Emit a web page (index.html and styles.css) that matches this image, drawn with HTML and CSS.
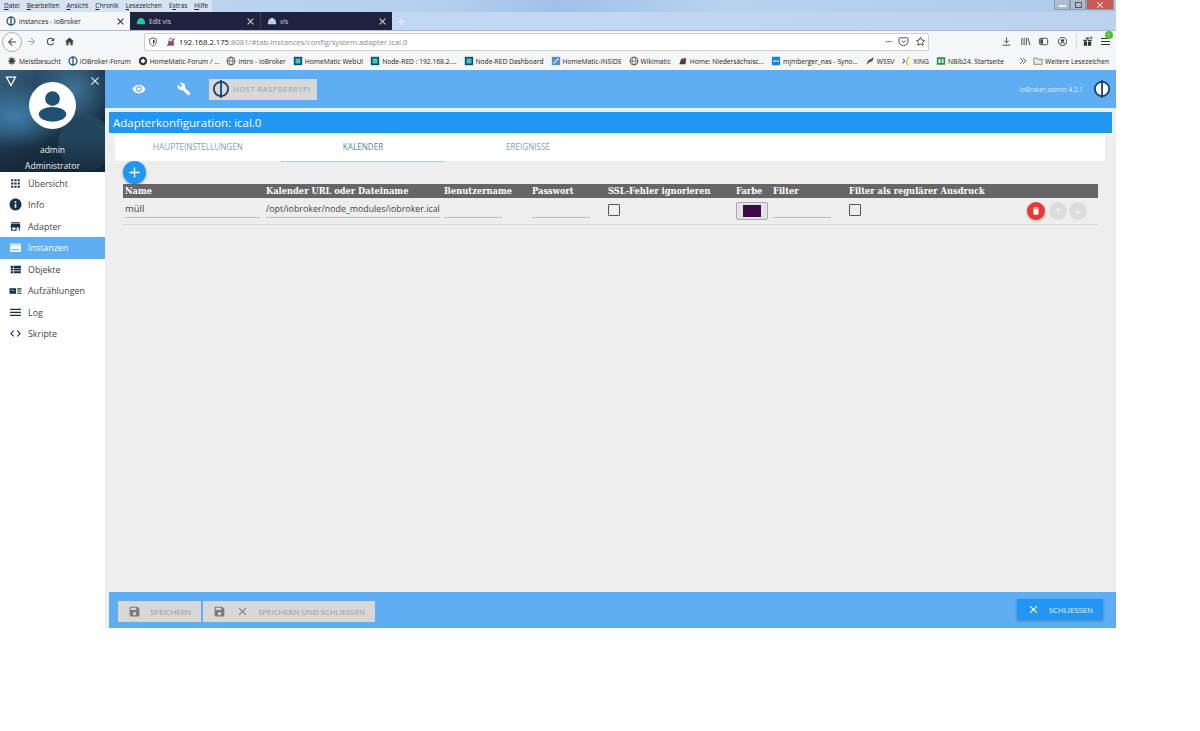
FILE: index.html
```html
<!DOCTYPE html>
<html lang="de">
<head>
    <meta charset="UTF-8">
    <meta name="viewport" content="width=device-width, initial-scale=1.0">
    <title>instances - ioBroker</title>
    <link rel="stylesheet" href="styles.css">
</head>
<body>

<div class="window">

    <div class="titlebar">
        <div class="menu">
            <span><u>D</u>atei</span>
            <span><u>B</u>earbeiten</span>
            <span><u>A</u>nsicht</span>
            <span><u>C</u>hronik</span>
            <span><u>L</u>esezeichen</span>
            <span>E<u>x</u>tras</span>
            <span><u>H</u>ilfe</span>
        </div>
        <div class="win-controls">
            <span class="win-btn"><i class="win-min"></i></span>
            <span class="win-btn"><i class="win-max"></i></span>
            <span class="win-btn win-close">
                <svg viewBox="0 0 24 24"><path d="M19 6.41L17.59 5 12 10.59 6.41 5 5 6.41 10.59 12 5 17.59 6.41 19 12 13.41 17.59 19 19 17.59 13.41 12z"/></svg>
            </span>
        </div>
    </div>

    <div class="tabstrip">
        <div class="tab tab-active">
            <svg class="tab-icon" viewBox="0 0 24 24"><circle cx="12" cy="12" r="9.5" fill="none" stroke="#1d4f7c" stroke-width="3"/><rect x="10.5" y="1" width="3" height="22" fill="#1d4f7c"/></svg>
            <span class="tab-title">instances - ioBroker</span>
            <svg class="tab-close" viewBox="0 0 24 24"><path d="M19 6.41L17.59 5 12 10.59 6.41 5 5 6.41 10.59 12 5 17.59 6.41 19 12 13.41 17.59 19 19 17.59 13.41 12z"/></svg>
        </div>
        <div class="tab tab-dark">
            <svg class="tab-icon" viewBox="0 0 24 24"><path d="M2 20c0-9 4-15 10-15s10 6 10 15z" fill="#22c99a"/></svg>
            <span class="tab-title">Edit vis</span>
            <svg class="tab-close" viewBox="0 0 24 24"><path d="M19 6.41L17.59 5 12 10.59 6.41 5 5 6.41 10.59 12 5 17.59 6.41 19 12 13.41 17.59 19 19 17.59 13.41 12z"/></svg>
        </div>
        <div class="tab tab-dark tab-last">
            <svg class="tab-icon" viewBox="0 0 24 24"><path d="M2 20c0-9 4-15 10-15s10 6 10 15z" fill="#b9d6e6"/></svg>
            <span class="tab-title">vis</span>
            <svg class="tab-close" viewBox="0 0 24 24"><path d="M19 6.41L17.59 5 12 10.59 6.41 5 5 6.41 10.59 12 5 17.59 6.41 19 12 13.41 17.59 19 19 17.59 13.41 12z"/></svg>
        </div>
        <span class="tab-new">+</span>
    </div>

    <div class="navbar">
        <span class="nav-back">
            <svg viewBox="0 0 24 24"><path d="M20 11H7.83l5.59-5.59L12 4l-8 8 8 8 1.41-1.41L7.83 13H20z"/></svg>
        </span>
        <svg class="nav-icon nav-off" viewBox="0 0 24 24"><path d="M4 11h12.17l-5.59-5.59L12 4l8 8-8 8-1.41-1.41L16.17 13H4z"/></svg>
        <svg class="nav-icon" viewBox="0 0 24 24"><path d="M17.65 6.35A7.96 7.96 0 0 0 12 4a8 8 0 1 0 7.73 10h-2.08A6 6 0 1 1 12 6c1.66 0 3.14.69 4.22 1.78L13 11h7V4z"/></svg>
        <svg class="nav-icon" viewBox="0 0 24 24"><path d="M10 20v-6h4v6h5v-8h3L12 3 2 12h3v8z"/></svg>
        <div class="urlbar">
            <svg class="url-shield" viewBox="0 0 24 24"><path d="M12 2l8 3v6c0 5-3.4 9.3-8 11-4.6-1.7-8-6-8-11V5z" fill="none" stroke="#444" stroke-width="2"/><path d="M12 6l4 1.5V11c0 3-1.6 5.4-4 6.7z" fill="#444"/></svg>
            <svg class="url-lock" viewBox="0 0 24 24"><rect x="5" y="10" width="14" height="11" rx="1" fill="#666"/><path d="M8 10V7a4 4 0 0 1 8 0v3" fill="none" stroke="#666" stroke-width="2"/><path d="M3 21L21 4" stroke="#d7264b" stroke-width="2.5"/></svg>
            <span class="url-text">192.168.2.175<em>:8081/#tab-instances/config/system.adapter.ical.0</em></span>
            <span class="url-dots">•••</span>
            <svg class="url-action" viewBox="0 0 24 24"><path d="M4 4h16a2 2 0 0 1 2 2v5a10 10 0 0 1-20 0V6a2 2 0 0 1 2-2z" fill="none" stroke="#444" stroke-width="2"/><path d="M7.5 10l4.5 4.5 4.500-4.5" fill="none" stroke="#444" stroke-width="2"/></svg>
            <svg class="url-action" viewBox="0 0 24 24"><path d="M12 3l2.8 5.8 6.2.9-4.5 4.4 1.1 6.300L12 17.4l-5.600 3 1.100-6.300L3 9.700l6.200-.9z" fill="none" stroke="#444" stroke-width="2"/></svg>
        </div>
        <div class="toolbar">
            <svg class="nav-icon" viewBox="0 0 24 24"><path d="M12 3v12M7 10l5 5 5-5M4 20h16" fill="none" stroke="#444" stroke-width="2"/></svg>
            <svg class="nav-icon" viewBox="0 0 24 24"><path d="M4 4v16M9 4v16M14 4v16M17 4l5 16" fill="none" stroke="#444" stroke-width="2"/></svg>
            <svg class="nav-icon" viewBox="0 0 24 24"><rect x="3" y="5" width="18" height="14" rx="3" fill="none" stroke="#444" stroke-width="2"/><rect x="5" y="7" width="6" height="10" fill="#444"/></svg>
            <svg class="nav-icon" viewBox="0 0 24 24"><circle cx="12" cy="12" r="9" fill="none" stroke="#444" stroke-width="2"/><circle cx="12" cy="10" r="3.5" fill="#444"/><path d="M6 17c2-3 10-3 12 0" fill="none" stroke="#444" stroke-width="2"/></svg>
            <span class="toolbar-sep"></span>
            <svg class="nav-icon" viewBox="0 0 24 24"><path d="M3 8h8v4H3zM13 8h8v4h-8zM4 13h7v8H4zM13 13h7v8h-7zM7 3l5 5 5-5z" fill="#333"/><circle cx="20" cy="4" r="3" fill="#2aa3df"/></svg>
            <span class="hamburger"><i></i><i></i><i></i><b>↑</b></span>
        </div>
    </div>

    <div class="bookmarks">
        <span class="bm"><svg viewBox="0 0 24 24"><path d="M12 8a4 4 0 1 0 0 8 4 4 0 0 0 0-8zm9 5v-2l-3-.5-1-2 2-2.5-1.5-1.5-2.5 2-2-1L12 2h-1l-.5 3-2 1-2.5-2L4.5 5.500l2 2.500-1 2L3 11v2l2.500.5 1 2-2 2.500L6 19.500l2.500-2 2 1 .5 3.500h1l.5-3.500 2-1 2.500 2 1.500-1.500-2-2.500 1-2z" fill="#444"/></svg>Meistbesucht</span>
        <span class="bm"><svg viewBox="0 0 24 24"><circle cx="12" cy="12" r="9.5" fill="none" stroke="#1d4f7c" stroke-width="3"/><rect x="10.5" y="1" width="3" height="22" fill="#1d4f7c"/></svg>IOBroker-Forum</span>
        <span class="bm"><svg viewBox="0 0 24 24"><circle cx="12" cy="12" r="10" fill="#333"/><path d="M12 6l6 6-6 6-6-6z" fill="#fff"/></svg>HomeMatic-Forum / ...</span>
        <span class="bm"><svg viewBox="0 0 24 24"><circle cx="12" cy="12" r="9.5" fill="none" stroke="#444" stroke-width="2"/><path d="M2 12h20M12 2c-6 6-6 14 0 20M12 2c6 6 6 14 0 20" fill="none" stroke="#444" stroke-width="1.5"/></svg>intro - ioBroker</span>
        <span class="bm"><svg viewBox="0 0 24 24"><rect x="2" y="2" width="20" height="20" fill="#0b4f66"/><rect x="6" y="6" width="12" height="12" fill="#49c2c9"/></svg>HomeMatic WebUI</span>
        <span class="bm"><svg viewBox="0 0 24 24"><rect x="2" y="2" width="20" height="20" fill="#0b4f66"/><rect x="6" y="6" width="12" height="12" fill="#49c2c9"/></svg>Node-RED : 192.168.2....</span>
        <span class="bm"><svg viewBox="0 0 24 24"><rect x="2" y="2" width="20" height="20" fill="#0b4f66"/><rect x="6" y="6" width="12" height="12" fill="#49c2c9"/></svg>Node-RED Dashboard</span>
        <span class="bm"><svg viewBox="0 0 24 24"><rect x="2" y="2" width="20" height="20" fill="#5b8fc0"/><path d="M6 18L18 6" stroke="#cfe2f3" stroke-width="3"/></svg>HomeMatic-INSIDE</span>
        <span class="bm"><svg viewBox="0 0 24 24"><circle cx="12" cy="12" r="9.5" fill="none" stroke="#444" stroke-width="2"/><path d="M2 12h20M12 2c-6 6-6 14 0 20M12 2c6 6 6 14 0 20" fill="none" stroke="#444" stroke-width="1.5"/></svg>Wikimatic</span>
        <span class="bm"><svg viewBox="0 0 24 24"><path d="M3 20l5-14 6 3 6-5-2 16z" fill="#444"/><circle cx="15" cy="8" r="3.5" fill="#c0272d"/></svg>Home: Niedersächsisc...</span>
        <span class="bm"><svg viewBox="0 0 24 24"><rect x="2" y="2" width="20" height="20" rx="2" fill="#1a86d0"/><path d="M5 12h14" stroke="#fff" stroke-width="3" stroke-dasharray="3 1"/></svg>mjmberger_nas - Syno...</span>
        <span class="bm"><svg viewBox="0 0 24 24"><path d="M3 21l5-11 6-3 7-4-3 9-7 3z" fill="#3d5a3a"/></svg>WSSV</span>
        <span class="bm"><svg viewBox="0 0 24 24"><path d="M4 7l3 5-4 6h3l4-6-3-5z" fill="#1a6f6f"/><path d="M18 2l-7 12 4 8h3l-4-8 7-12z" fill="#b0c417"/></svg>XING</span>
        <span class="bm"><svg viewBox="0 0 24 24"><rect x="2" y="3" width="20" height="18" fill="#2f8f4e"/><path d="M6 8h5v9H6zM14 8h4v9h-4z" fill="#fff"/></svg>NBib24. Startseite</span>
        <span class="bm-more">
            <svg viewBox="0 0 24 24"><path d="M5 5l7 7-7 7M12 5l7 7-7 7" fill="none" stroke="#444" stroke-width="2"/></svg>
            <span class="bm"><svg viewBox="0 0 24 24"><path d="M2 5h8l2 3h10v12H2z" fill="#e9e9e9" stroke="#555" stroke-width="1.5"/></svg>Weitere Lesezeichen</span>
        </span>
    </div>

    <div class="app">

        <aside class="sidebar">
            <div class="profile">
                <svg class="profile-toggle" viewBox="0 0 24 24"><path d="M3 4h18L12 21z" fill="none" stroke="#fff" stroke-width="2.5"/></svg>
                <svg class="profile-close" viewBox="0 0 24 24"><path d="M19 6.41L17.59 5 12 10.59 6.41 5 5 6.41 10.59 12 5 17.59 6.41 19 12 13.41 17.59 19 19 17.59 13.41 12z"/></svg>
                <div class="avatar">
                    <svg viewBox="0 0 48 48"><circle cx="24" cy="24" r="24" fill="#fff"/><circle cx="24" cy="17" r="7.5" fill="#1f4f73"/><ellipse cx="24" cy="33" rx="14" ry="7.5" fill="#1f4f73"/></svg>
                </div>
                <div class="profile-name">admin</div>
                <div class="profile-role">Administrator</div>
            </div>
            <ul class="side-menu">
                <li><svg viewBox="0 0 24 24"><path d="M4 8h4V4H4v4zm6 12h4v-4h-4v4zm-6 0h4v-4H4v4zm0-6h4v-4H4v4zm6 0h4v-4h-4v4zm6-10v4h4V4h-4zm-6 4h4V4h-4v4zm6 6h4v-4h-4v4zm0 6h4v-4h-4v4z"/></svg>Übersicht</li>
                <li><svg viewBox="0 0 24 24"><path d="M12 1C5.9 1 1 5.9 1 12s4.9 11 11 11 11-4.9 11-11S18.1 1 12 1zm1.5 17h-3v-7h3v7zm0-9h-3V6h3v3z"/></svg>Info</li>
                <li><svg viewBox="0 0 24 24"><path d="M20 4H4v2h16V4zm1 10v-2l-1-5H4l-1 5v2h1v6h10v-6h4v6h2v-6h1zm-9 4H6v-4h6v4z"/></svg>Adapter</li>
                <li class="active"><svg viewBox="0 0 24 24"><path d="M2 5h20v15H2z" fill="#fff"/><path d="M2 5h20v5H2z" fill="#cfe6fb"/><path d="M5 15h14v2H5z" fill="#5faef3"/></svg>Instanzen</li>
                <li><svg viewBox="0 0 24 24"><path d="M3 14h4.5v-4H3v4zm0 5h4.5v-4H3v4zM3 9h4.5V5H3v4zm5.5 5H22v-4H8.5v4zm0 5H22v-4H8.5v4zm0-14v4H22V5H8.5z"/></svg>Objekte</li>
                <li><svg viewBox="0 0 24 24"><path d="M1 8h12v10H1zM15 8h8v2h-8zM15 12h8v2h-8zM15 16h8v2h-8z"/><path d="M4 11h6v1H4z" fill="#fff"/></svg>Aufzählungen</li>
                <li><svg viewBox="0 0 24 24"><path d="M2 5h20v2.5H2zM2 10.5h20V13H2zM2 16h20v2.5H2z"/></svg>Log</li>
                <li><svg viewBox="0 0 24 24"><path d="M9.4 16.6L4.8 12l4.6-4.6L8 6l-6 6 6 6 1.4-1.4zm5.2 0l4.6-4.6-4.6-4.6L16 6l6 6-6 6-1.4-1.4z"/></svg>Skripte</li>
            </ul>
        </aside>

        <main class="content">
            <header class="appbar">
                <svg class="appbar-icon" viewBox="0 0 24 24"><path d="M12 4.5C7 4.5 2.73 7.61 1 12c1.73 4.39 6 7.5 11 7.5s9.27-3.11 11-7.5c-1.73-4.39-6-7.5-11-7.5zM12 17c-2.76 0-5-2.24-5-5s2.24-5 5-5 5 2.24 5 5-2.24 5-5 5zm0-8c-1.66 0-3 1.34-3 3s1.34 3 3 3 3-1.34 3-3-1.34-3-3-3z"/></svg>
                <svg class="appbar-icon" viewBox="0 0 24 24"><path d="M22.7 19l-9.1-9.1c.9-2.3.4-5-1.5-6.9-2-2-5-2.4-7.4-1.3L9 6 6 9 1.6 4.7C.4 7.1.9 10.1 2.9 12.1c1.9 1.9 4.6 2.4 6.9 1.5l9.1 9.1c.4.4 1 .4 1.4 0l2.3-2.3c.5-.4.5-1.1.1-1.4z"/></svg>
                <div class="host-btn">
                    <svg viewBox="0 0 24 24"><circle cx="12" cy="12" r="9.5" fill="none" stroke="#1c4468" stroke-width="2.5"/><rect x="10.8" y="0" width="2.4" height="24" fill="#1c4468"/></svg>
                    <span>HOST RASPBERRYPI</span>
                </div>
                <span class="version">ioBroker.admin 4.2.1</span>
                <svg class="appbar-logo" viewBox="0 0 24 24"><circle cx="12" cy="12" r="9.5" fill="#fff" stroke="#1c4468" stroke-width="2.5"/><rect x="10.8" y="0" width="2.4" height="24" fill="#1c4468"/></svg>
            </header>

            <section class="dialog">
                <h1 class="dialog-title">Adapterkonfiguration: ical.0</h1>
                <nav class="tabs">
                    <a class="tabs-item">HAUPTEINSTELLUNGEN</a>
                    <a class="tabs-item tabs-current">KALENDER</a>
                    <a class="tabs-item">EREIGNISSE</a>
                </nav>
                <div class="dialog-body">
                    <button class="add-btn"><svg viewBox="0 0 24 24"><path d="M19 13h-6v6h-2v-6H5v-2h6V5h2v6h6v2z"/></svg></button>
                    <table class="cal-table">
                        <thead>
                            <tr>
                                <th class="col-name">Name</th>
                                <th class="col-url">Kalender URL oder Dateiname</th>
                                <th class="col-user">Benutzername</th>
                                <th class="col-pass">Passwort</th>
                                <th class="col-ssl">SSL-Fehler ignorieren</th>
                                <th class="col-color">Farbe</th>
                                <th class="col-filter">Filter</th>
                                <th class="col-regex">Filter als regulärer Ausdruck</th>
                                <th class="col-btns"></th>
                            </tr>
                        </thead>
                        <tbody>
                            <tr>
                                <td><div class="field">müll</div></td>
                                <td><div class="field field-url">/opt/iobroker/node_modules/iobroker.ical</div></td>
                                <td><div class="field field-short"></div></td>
                                <td><div class="field field-short"></div></td>
                                <td><span class="checkbox"></span></td>
                                <td><span class="color-btn"><i></i></span></td>
                                <td><div class="field field-short"></div></td>
                                <td><span class="checkbox"></span></td>
                                <td>
                                    <div class="row-btns">
                                        <span class="round-btn round-del"><svg viewBox="0 0 24 24"><path d="M6 19c0 1.1.9 2 2 2h8c1.1 0 2-.9 2-2V7H6v12zM19 4h-3.5l-1-1h-5l-1 1H5v2h14V4z"/></svg></span>
                                        <span class="round-btn"><svg viewBox="0 0 24 24"><path d="M4 12l1.41 1.41L11 7.83V20h2V7.83l5.58 5.59L20 12l-8-8-8 8z"/></svg></span>
                                        <span class="round-btn"><svg viewBox="0 0 24 24"><path d="M20 12l-1.41-1.41L13 16.17V4h-2v12.17l-5.58-5.59L4 12l8 8 8-8z"/></svg></span>
                                    </div>
                                </td>
                            </tr>
                        </tbody>
                    </table>
                </div>
                <footer class="dialog-footer">
                    <span class="foot-btn">
                        <svg viewBox="0 0 24 24"><path d="M17 3H5c-1.11 0-2 .9-2 2v14c0 1.1.89 2 2 2h14c1.1 0 2-.9 2-2V7l-4-4zm-5 16c-1.66 0-3-1.34-3-3s1.34-3 3-3 3 1.34 3 3-1.34 3-3 3zm3-10H5V5h10v4z"/></svg>
                        <span>SPEICHERN</span>
                    </span>
                    <span class="foot-btn">
                        <svg viewBox="0 0 24 24"><path d="M17 3H5c-1.11 0-2 .9-2 2v14c0 1.1.89 2 2 2h14c1.1 0 2-.9 2-2V7l-4-4zm-5 16c-1.66 0-3-1.34-3-3s1.34-3 3-3 3 1.34 3 3-1.34 3-3 3zm3-10H5V5h10v4z"/></svg>
                        <svg viewBox="0 0 24 24"><path d="M19 6.41L17.59 5 12 10.59 6.41 5 5 6.41 10.59 12 5 17.59 6.41 19 12 13.41 17.59 19 19 17.59 13.41 12z"/></svg>
                        <span>SPEICHERN UND SCHLIESSEN</span>
                    </span>
                    <span class="foot-btn foot-close">
                        <svg viewBox="0 0 24 24"><path d="M19 6.41L17.59 5 12 10.59 6.41 5 5 6.41 10.59 12 5 17.59 6.41 19 12 13.41 17.59 19 19 17.59 13.41 12z"/></svg>
                        <span>SCHLIESSEN</span>
                    </span>
                </footer>
            </section>
        </main>
    </div>
</div>

</body>
</html>
```

FILE: styles.css
```css
* {
    box-sizing: border-box;
}
html, body {
    margin: 0;
    background: #fff;
}
body {
    height: 731px;
    overflow: hidden;
    font-family: "Open Sans", "Liberation Sans", sans-serif;
    color: #333;
}
svg {
    display: block;
    flex: none;
    fill: currentColor;
}
.window {
    width: 1116px;
    height: 628px;
    display: flex;
    flex-direction: column;
}

/* browser chrome */
.titlebar {
    height: 12px;
    display: flex;
    justify-content: space-between;
    background: linear-gradient(90deg, #c3d8ef 0%, #b4cfec 40%, #9fc1e8 50%, #b9d3ef 65%, #aecbeb 100%);
}
.menu {
    width: 212px;
    padding-left: 4px;
    display: flex;
    gap: 7px;
    font-size: 6.4px;
    line-height: 11px;
    background: #d6e3f1;
    color: #222;
}
.win-controls {
    width: 60px;
    height: 10px;
    margin-right: 2px;
    display: flex;
}
.win-btn {
    flex: 1;
    display: flex;
    align-items: center;
    justify-content: center;
    background: #aebccc;
    border: 1px solid #8d9bad;
    border-top: none;
}
.win-min {
    width: 7px;
    height: 2px;
    margin-top: 3px;
    background: #eef;
}
.win-max {
    width: 7px;
    height: 6px;
    border: 1px solid #556;
}
.win-close {
    flex: 1.8;
    background: #c75a52;
    color: #fff;
}
.win-close svg {
    width: 10px;
    height: 10px;
}
.tabstrip {
    height: 18px;
    display: flex;
    align-items: stretch;
    background: linear-gradient(90deg, #bcd6f2, #c1d8f1 50%, #bbd3ee);
}
.tab {
    width: 131px;
    padding: 0 4px 0 6px;
    display: flex;
    align-items: center;
    gap: 3px;
    font-size: 6.7px;
}
.tab-active {
    width: 130px;
    background: #f5f6f7;
    color: #222;
}
.tab-dark {
    background: #20233f;
    color: #d7d8e0;
    border-right: 1px solid #3a3d58;
}
.tab-last {
    border-right: none;
}
.tab-icon {
    width: 10px;
    height: 10px;
}
.tab-title {
    flex: 1;
}
.tab-close {
    width: 11px;
    height: 11px;
}
.tab-new {
    margin-left: 5px;
    color: #e8f0fa;
    font-size: 15px;
    line-height: 18px;
}
.navbar {
    height: 22px;
    padding-left: 2px;
    display: flex;
    align-items: center;
    background: #f5f6f7;
    border-top: 1px solid #a9bcd2;
}
.nav-back {
    width: 20px;
    height: 20px;
    margin-right: 4px;
    padding: 3px;
    border: 1px solid #b0b0b0;
    border-radius: 50%;
    background: #fbfbfb;
    color: #444;
}
.nav-icon {
    width: 11px;
    height: 11px;
    margin-right: 8px;
    color: #444;
}
.nav-off {
    color: #aaa;
}
.urlbar {
    width: 785px;
    height: 18px;
    margin-left: 61px;
    padding: 0 2px 0 3px;
    display: flex;
    align-items: center;
    background: #fff;
    border: 1px solid #cfcfcf;
    border-radius: 2px;
}
.url-shield {
    width: 10px;
    height: 10px;
    margin-right: 8px;
}
.url-lock {
    width: 10px;
    height: 10px;
    margin-right: 3px;
}
.url-text {
    flex: 1;
    font-size: 7.7px;
    color: #222;
}
.url-text em {
    font-style: normal;
    color: #8a8a8a;
}
.url-dots {
    margin-right: 6px;
    font-size: 6px;
    color: #444;
}
.url-action {
    width: 11px;
    height: 11px;
    margin-left: 6px;
}
.url-dots + .url-action {
    margin-left: 0;
}
.toolbar {
    margin-left: 72px;
    display: flex;
    align-items: center;
}
.toolbar .nav-icon {
    margin-right: 7.5px;
}
.toolbar-sep {
    width: 1px;
    height: 16px;
    margin: 0 5px 0 1px;
    background: #ddd;
}
.hamburger {
    position: relative;
    width: 9px;
    display: flex;
    flex-direction: column;
    gap: 2px;
}
.hamburger i {
    height: 1px;
    background: #333;
}
.hamburger b {
    position: absolute;
    top: -7px;
    left: 4px;
    width: 8px;
    height: 8px;
    border-radius: 50%;
    background: #57bd35;
    color: #fff;
    font-size: 6px;
    line-height: 8px;
    text-align: center;
}
.bookmarks {
    height: 18px;
    padding-left: 7px;
    display: flex;
    align-items: center;
    gap: 7px;
    background: #f5f6f7;
    font-size: 6.7px;
    white-space: nowrap;
    color: #222;
}
.bm {
    display: flex;
    align-items: center;
    gap: 2px;
}
.bm svg {
    width: 10px;
    height: 10px;
}
.bm-more {
    margin-left: auto;
    margin-right: 7px;
    display: flex;
    align-items: center;
    gap: 5px;
}
.bm-more > svg {
    width: 10px;
    height: 10px;
}

/* ioBroker app */
.app {
    flex: 1;
    display: flex;
    min-height: 0;
}
.sidebar {
    width: 105px;
    flex: none;
    background: #fff;
}
.profile {
    position: relative;
    height: 102px;
    padding-top: 12px;
    display: flex;
    flex-direction: column;
    align-items: center;
    color: #eaf0f4;
    font-size: 8.5px;
    background:
        linear-gradient(180deg, transparent 62%, rgba(20, 38, 52, .75) 100%),
        radial-gradient(circle at 82% 72%, #23465f 0 24%, transparent 25%),
        radial-gradient(ellipse at 15% 45%, #3f7ea8 0, transparent 42%),
        radial-gradient(ellipse at 70% 20%, #3e7396 0, transparent 38%),
        linear-gradient(135deg, #345f7c 0%, #1b3549 50%, #10202e 100%);
}
.profile-toggle {
    position: absolute;
    top: 5px;
    left: 5px;
    width: 12px;
    height: 12px;
}
.profile-close {
    position: absolute;
    top: 4px;
    right: 3px;
    width: 14px;
    height: 14px;
    color: #dfe8ee;
}
.avatar svg {
    width: 47px;
    height: 47px;
}
.profile-name {
    margin-top: 14px;
    line-height: 14px;
}
.profile-role {
    margin-top: 2px;
    line-height: 14px;
}
.side-menu {
    margin: 0;
    padding: .5px 0 0;
    list-style: none;
}
.side-menu li {
    height: 21.5px;
    padding-left: 9px;
    display: flex;
    align-items: center;
    gap: 6px;
    font-size: 8.9px;
    color: #444;
}
.side-menu li svg {
    width: 13px;
    height: 13px;
    color: #16324b;
}
.side-menu li.active {
    background: #5faef3;
    color: #fff;
}
.content {
    flex: 1;
    min-width: 0;
    display: flex;
    flex-direction: column;
    background: #eee;
}
.appbar {
    height: 38px;
    padding: 0 5px 0 27px;
    display: flex;
    align-items: center;
    background: #5faef3;
    color: #fff;
}
.appbar-icon {
    width: 14px;
    height: 14px;
    margin-right: 31px;
}
.host-btn {
    width: 108px;
    height: 21px;
    margin-left: -13px;
    padding-left: 3px;
    display: flex;
    align-items: center;
    gap: 3px;
    background: #d8d8d8;
    color: #a3a3a3;
    font-size: 7.8px;
    letter-spacing: .4px;
}
.host-btn svg {
    width: 18px;
    height: 18px;
}
.version {
    margin-left: auto;
    margin-right: 10px;
    font-size: 6.5px;
    color: #d9ecfb;
}
.appbar-logo {
    width: 18px;
    height: 18px;
}
.dialog {
    flex: 1;
    min-height: 0;
    margin-left: 4px;
    padding-top: 4px;
    display: flex;
    flex-direction: column;
}
.dialog-title {
    width: 1003px;
    height: 21px;
    margin: 0;
    padding-left: 4px;
    background: #2196f3;
    color: #fff;
    font-size: 11.5px;
    font-weight: 400;
    line-height: 21px;
}
.tabs {
    width: 990px;
    height: 28px;
    margin-left: 6px;
    display: grid;
    grid-template-columns: 166px 164px 166px;
    background: #fff;
}
.tabs-item {
    text-align: center;
    font-size: 8.15px;
    line-height: 28px;
    color: #7b9fb9;
}
.tabs-current {
    color: #5b84a3;
    border-bottom: 1px solid #a9cbe4;
}
.dialog-body {
    flex: 1;
    min-height: 0;
    padding-left: 14px;
}
.add-btn {
    width: 23px;
    height: 23px;
    padding: 3px;
    display: block;
    border: none;
    border-radius: 50%;
    background: #2196f3;
    color: #fff;
    box-shadow: 0 1px 3px rgba(0, 0, 0, .3);
}
.cal-table {
    width: 975px;
    table-layout: fixed;
    border-collapse: collapse;
}
.cal-table th {
    height: 14px;
    padding: 0 2px;
    background: #666;
    color: #fff;
    font-family: "DejaVu Serif", serif;
    font-size: 8.3px;
    font-weight: 700;
    line-height: 14px;
    text-align: left;
    white-space: nowrap;
}
.col-name { width: 141px; }
.col-url { width: 178px; }
.col-user { width: 88px; }
.col-pass { width: 76px; }
.col-ssl { width: 128px; }
.col-color { width: 37px; }
.col-filter { width: 76px; }
.col-regex { width: 172px; }
.cal-table td {
    height: 26px;
    padding: 0 2px;
    vertical-align: top;
    border-bottom: 1px solid #d8d8d8;
}
.field {
    width: calc(100% - 2px);
    height: 20px;
    border-bottom: 1px solid #bdbdbd;
    font-size: 9.5px;
    line-height: 22px;
    color: #444;
    white-space: nowrap;
}
.field-short {
    width: 58px;
}
.field-url {
    width: 174px;
    font-size: 8.85px;
}
.checkbox {
    display: block;
    width: 12px;
    height: 12px;
    margin-top: 6px;
    border: 1px solid #555;
    border-radius: 1px;
}
.color-btn {
    display: block;
    width: 32px;
    height: 18px;
    margin-top: 4px;
    padding: 2px 6px;
    border: 1px solid #aaa;
    border-radius: 2px;
    background: #e4e4e8;
}
.color-btn i {
    display: block;
    height: 100%;
    background: #3c0a46;
}
.row-btns {
    padding: 4px 0 0 6px;
    display: flex;
    gap: 2px;
}
.round-btn {
    width: 18px;
    height: 18px;
    padding: 4px;
    border-radius: 50%;
    background: #dcdcdc;
    color: #f5f5f5;
}
.round-del {
    margin-right: 2px;
    background: #e53935;
    color: #fff;
    box-shadow: 0 1px 3px rgba(0, 0, 0, .3);
}
.dialog-footer {
    height: 36px;
    padding: 9px 13px 0 9px;
    display: flex;
    gap: 2px;
    background: #5faef3;
}
.foot-btn {
    height: 21px;
    padding: 0 10px;
    display: flex;
    align-items: center;
    gap: 8px;
    background: #d8d8d8;
    color: #7c7c7c;
    font-size: 7.8px;
}
.foot-btn svg {
    width: 13px;
    height: 13px;
}
.foot-btn svg + svg {
    margin-left: 2px;
}
.foot-btn span {
    margin-left: 1px;
    color: #9a9a9a;
}
.foot-close {
    margin-left: auto;
    margin-top: -2px;
    background: #2196f3;
    color: #fff;
    box-shadow: 0 1px 3px rgba(0, 0, 0, .25);
}
.foot-close span {
    color: #e8f4fe;
}
```
